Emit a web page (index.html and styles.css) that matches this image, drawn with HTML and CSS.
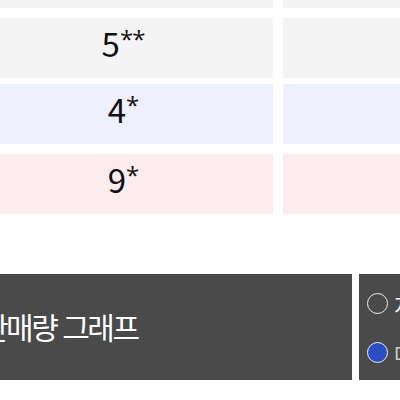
FILE: index.html
```html
<!DOCTYPE html>
<html lang="ko">
<head>
<meta charset="utf-8">
<link rel="stylesheet" href="styles.css">
</head>
<body>
<div class="table">
  <div class="row gray"><div class="cell"></div><div class="cell"></div></div>
  <div class="row gray"><div class="cell">5<span class="mark">**</span></div><div class="cell"></div></div>
  <div class="row blue tight"><div class="cell">4<span class="mark">*</span></div><div class="cell"></div></div>
  <div class="row pink"><div class="cell">9<span class="mark">*</span></div><div class="cell"></div></div>
</div>
<div class="panel">
  <div class="title">판매량 그래프</div>
  <div class="options">
    <label class="opt"><span class="radio"></span><span class="opt-text">지역별</span></label>
    <label class="opt"><span class="radio on"></span><span class="opt-text dim">매출별</span></label>
  </div>
</div>
</body>
</html>
```
FILE: styles.css
```css
html, body {
  margin: 0;
  padding: 0;
  width: 400px;
  height: 400px;
  overflow: hidden;
  background: #fff;
  font-family: "Noto Sans CJK KR", "Noto Sans", sans-serif;
}
.table {
  margin-top: -52px;
  margin-left: -27px;
  display: flex;
  flex-direction: column;
  gap: 10px;
  width: 500px;
}
.row {
  display: grid;
  grid-template-columns: 300px 200px;
  column-gap: 10px;
  height: 60px;
}
.row.tight { margin-top: -4px; }
.cell {
  display: flex;
  align-items: center;
  justify-content: center;
  font-size: 33px;
  color: #111;
  line-height: 1;
  padding-bottom: 9px;
  box-sizing: border-box;
}
.mark {
  font-family: "Open Sans", "Noto Sans", sans-serif;
  font-size: 24px;
  align-self: flex-start;
  margin-top: 9px;
  letter-spacing: -1px;
}
.gray .cell { background: #f4f4f4; }
.blue .cell { background: #eef0fd; }
.pink .cell { background: #fdeced; }

.panel {
  margin-top: 60px;
  margin-left: -40px;
  display: flex;
  gap: 7px;
  height: 106px;
  width: 520px;
}
.title {
  width: 392px;
  flex: none;
  background: #4a4a4a;
  color: #fff;
  font-size: 30px;
  letter-spacing: -2.5px;
  display: flex;
  align-items: center;
  padding-left: 21px;
  padding-bottom: 2px;
  box-sizing: border-box;
}
.options {
  flex: 1;
  background: #4a4a4a;
  display: flex;
  flex-direction: column;
  justify-content: center;
  gap: 27px;
  padding-left: 8px;
  padding-top: 2px;
}
.opt {
  display: flex;
  align-items: center;
  gap: 6px;
  color: #fff;
  font-size: 22px;
  height: 22px;
}
.radio {
  width: 19px;
  height: 19px;
  border: 1.2px solid #eee;
  border-radius: 50%;
  box-sizing: content-box;
  flex: none;
}
.radio.on { background: #2a4fc3; }
.opt-text.dim { color: #ccc; }
```
